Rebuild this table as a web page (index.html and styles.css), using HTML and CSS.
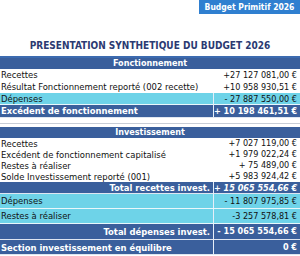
FILE: index.html
```html
<!DOCTYPE html>
<html lang="fr">
<head>
<meta charset="utf-8">
<title>Budget Primitif 2026</title>
<link rel="stylesheet" href="styles.css">
</head>
<body>
<div class="page">
  <div class="topbar"><span class="badge">Budget Primitif 2026</span></div>
  <h1 class="title">PRESENTATION SYNTHETIQUE DU BUDGET 2026</h1>

  <div class="section fonct">
    <div class="row head">Fonctionnement</div>
    <div class="row plain"><span class="lbl">Recettes</span><span class="val">+27 127 081,00 €</span></div>
    <div class="row plain"><span class="lbl">Résultat Fonctionnement reporté (002 recette)</span><span class="val">+10 958 930,51 €</span></div>
    <div class="row cyan"><span class="lbl">Dépenses</span><span class="val">- 27 887 550,00 €</span></div>
    <div class="row dark bold big"><span class="lbl">Excédent de fonctionnement</span><span class="val">+ 10 198 461,51 €</span></div>
  </div>

  <div class="section inv">
    <div class="row head">Investissement</div>
    <div class="row plain"><span class="lbl">Recettes</span><span class="val">+7 027 119,00 €</span></div>
    <div class="row plain"><span class="lbl">Excédent de fonctionnement capitalisé</span><span class="val">+1 979 022,24 €</span></div>
    <div class="row plain"><span class="lbl">Restes à réaliser</span><span class="val">+ 75 489,00 €</span></div>
    <div class="row plain"><span class="lbl">Solde Investissement reporté (001)</span><span class="val">+5 983 924,42 €</span></div>
    <div class="row dark bold total"><span class="lbl">Total recettes invest.</span><span class="val ital">+ 15 065 554,66 €</span></div>
    <div class="row cyan tall"><span class="lbl">Dépenses</span><span class="val">- 11 807 975,85 €</span></div>
    <div class="row cyan tall"><span class="lbl">Restes à réaliser</span><span class="val">-3 257 578,81 €</span></div>
    <div class="row dark bold tall total"><span class="lbl">Total dépenses invest.</span><span class="val">- 15 065 554,66 €</span></div>
    <div class="row dark bold tall last"><span class="lbl">Section investissement en équilibre</span><span class="val">0 €</span></div>
  </div>
</div>
</body>
</html>
```

FILE: styles.css
```css
html, body {
  margin: 0;
  padding: 0;
  background: #ffffff;
}
body {
  font-family: "DejaVu Sans Condensed", "DejaVu Sans", sans-serif;
  font-size: 9px;
  color: #111111;
  width: 300px;
  height: 256px;
  overflow: hidden;
}
.page {
  display: flex;
  flex-direction: column;
}
.topbar {
  display: flex;
  justify-content: flex-end;
  height: 14px;
}
.badge {
  width: 101px;
  height: 14px;
  background: #2f7fd0;
  color: #ffffff;
  font-weight: bold;
  font-size: 8.5px;
  display: flex;
  align-items: center;
  justify-content: center;
}
.title {
  margin: 26px 0 0 0;
  height: 18px;
  font-size: 10px;
  font-weight: bold;
  color: #2b3a72;
  text-align: center;
  line-height: 12px;
  border-bottom: 2px solid #3c6bb0;
  box-sizing: border-box;
}
.section {
  display: flex;
  flex-direction: column;
}
.section.inv {
  margin-top: 5px;
  border-top: 1px solid #c8cdd6;
  padding-top: 3px;
}
.row {
  display: grid;
  grid-template-columns: 213px 87px;
  height: 11px;
  line-height: 11px;
  white-space: nowrap;
  box-sizing: border-box;
}
.fonct .row {
  height: 12px;
  line-height: 12px;
}
.fonct .row.head {
  height: 11px;
  line-height: 11px;
}
.fonct .row.big {
  height: 13px;
  line-height: 12px;
}
.row.total {
  height: 12px;
  line-height: 12px;
}
.row.tall {
  height: 15px;
  line-height: 14px;
}
.row.tall.total {
  height: 16px;
  line-height: 15px;
}
.row.last {
  height: 15px;
  line-height: 15px;
  border-bottom: 0;
}
.row .lbl {
  padding-left: 1px;
  overflow: hidden;
  font-size: 9.4px;
}
.row .val {
  text-align: right;
  padding-right: 3px;
}
.row.head {
  display: block;
  background: #3a5f9c;
  color: #ffffff;
  font-weight: bold;
  text-align: center;
}
.row.cyan {
  background: #6ed3e8;
  border-bottom: 1px solid #e8f7fb;
}
.row.cyan .val,
.row.dark .val {
  border-left: 1px solid #e6eef8;
}
.row.dark {
  background: #3a5f9c;
  color: #ffffff;
  border-bottom: 1px solid #dfe6f1;
}
.row.bold {
  font-weight: bold;
}
.row.total .lbl {
  text-align: right;
  padding-right: 3px;
}
.ital {
  font-style: italic;
}
```
